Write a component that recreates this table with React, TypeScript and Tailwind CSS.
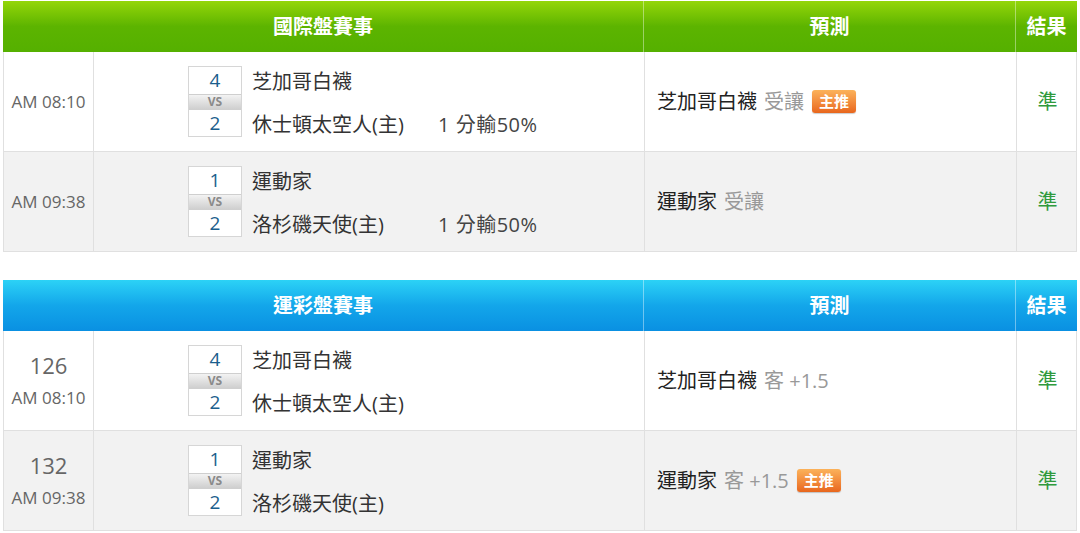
import React from "react";

type Game = {
  no?: string;
  time: string;
  home: string;
  away: string;
  homeScore: number;
  awayScore: number;
  spread?: string;
  pick: string;
  pickNote: string;
  star?: boolean;
  result: string;
};

const intl: Game[] = [
  { time: "AM 08:10", home: "芝加哥白襪", away: "休士頓太空人(主)", homeScore: 4, awayScore: 2, spread: "1 分輸50%", pick: "芝加哥白襪", pickNote: "受讓", star: true, result: "準" },
  { time: "AM 09:38", home: "運動家", away: "洛杉磯天使(主)", homeScore: 1, awayScore: 2, spread: "1 分輸50%", pick: "運動家", pickNote: "受讓", result: "準" },
];

const lottery: Game[] = [
  { no: "126", time: "AM 08:10", home: "芝加哥白襪", away: "休士頓太空人(主)", homeScore: 4, awayScore: 2, pick: "芝加哥白襪", pickNote: "客 +1.5", result: "準" },
  { no: "132", time: "AM 09:38", home: "運動家", away: "洛杉磯天使(主)", homeScore: 1, awayScore: 2, pick: "運動家", pickNote: "客 +1.5", star: true, result: "準" },
];

const font = "font-['Open_Sans','Noto_Sans_CJK_TC',sans-serif]";

const Badge = () => (
  <span className="ml-[8px] inline-flex h-[23px] w-[44px] items-center justify-center rounded-[3px] bg-gradient-to-b from-[#fbb25a] to-[#e8661c] text-[15px] font-bold leading-none text-white shadow-[0_1px_1px_rgba(0,0,0,0.2)]">
    主推
  </span>
);

const ScoreBox = ({ a, b }: { a: number; b: number }) => (
  <div className="flex w-[54px] flex-col border border-[#d6d6d6] bg-white">
    <div className="flex h-[27px] items-center justify-center text-[19px] leading-none text-[#1b5e8c]">{a}</div>
    <div className="flex h-[16px] items-center justify-center border-y border-[#cfcfcf] bg-gradient-to-b from-[#f3f3f3] to-[#cfcfcf] text-[12px] font-bold leading-none text-[#8a8a8a]">
      VS
    </div>
    <div className="flex h-[26px] items-center justify-center text-[19px] leading-none text-[#1b5e8c]">{b}</div>
  </div>
);

const Table = ({ title, games, head }: { title: string; games: Game[]; head: string }) => (
  <div className={`w-[1074px] ${font}`}>
    <div className={`grid h-[51px] grid-cols-[641px_372px_61px] ${head} text-[20px] font-bold text-white`}>
      <div className="flex items-center justify-center border-r border-white/40">{title}</div>
      <div className="flex items-center justify-center border-r border-white/40">預測</div>
      <div className="flex items-center justify-center">結果</div>
    </div>
    {games.map((g, i) => (
      <div
        key={i}
        className={`grid h-[100px] grid-cols-[90px_551px_372px_61px] border-x border-b border-[#e0e0e0] ${i % 2 ? "bg-[#f2f2f2]" : "bg-white"}`}
      >
        <div className="flex flex-col items-center justify-center border-r border-[#e0e0e0] text-[#666]">
          {g.no && <div className="text-[22px] leading-[28px]">{g.no}</div>}
          <div className={`text-[17px] ${g.no ? "mt-[6px]" : ""}`}>{g.time}</div>
        </div>
        <div className="flex items-center border-r border-[#e0e0e0] pl-[94px]">
          <ScoreBox a={g.homeScore} b={g.awayScore} />
          <div className="ml-[10px] flex flex-col gap-[15px] pt-[4px] text-[20px] leading-[28px] text-[#333]">
            <div>{g.home}</div>
            <div className="flex">
              <span className="w-[186px]">{g.away}</span>
              {g.spread && <span className="tracking-[0.5px] text-[#444]">{g.spread}</span>}
            </div>
          </div>
        </div>
        <div className="flex items-center border-r border-[#e0e0e0] pl-[12px] text-[20px] text-[#222]">
          <span>{g.pick}</span>
          <span className="ml-[7px] text-[#999]">{g.pickNote}</span>
          {g.star && <Badge />}
        </div>
        <div className="flex items-center justify-center text-[20px] text-[#2f9a3c]">{g.result}</div>
      </div>
    ))}
  </div>
);

export default function App() {
  return (
    <div className="min-h-[533px] bg-white pl-[3px] pt-[1px]">
      <Table title="國際盤賽事" games={intl} head="bg-gradient-to-b from-[#94d60a] via-[#5cb400] to-[#55b000]" />
      <div className="h-[28px]" />
      <Table title="運彩盤賽事" games={lottery} head="bg-gradient-to-b from-[#2cd2f6] via-[#13a6ea] to-[#0a90e2]" />
    </div>
  );
}
